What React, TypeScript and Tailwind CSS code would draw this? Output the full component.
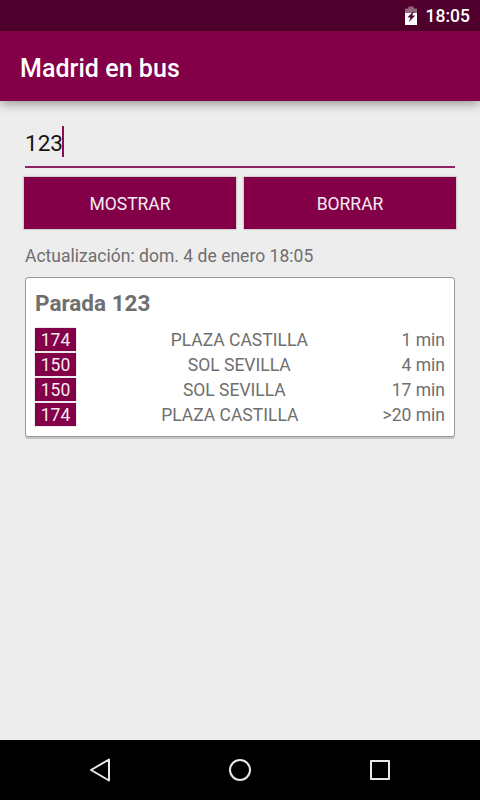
const arrivals = [
  { line: "174", destination: "PLAZA CASTILLA", time: "1 min" },
  { line: "150", destination: "SOL SEVILLA", time: "4 min" },
  { line: "150", destination: "SOL SEVILLA", time: "17 min" },
  { line: "174", destination: "PLAZA CASTILLA", time: ">20 min" },
];

function StatusBar() {
  return (
    <div className="flex h-[31px] items-start justify-end bg-[#4f002c] pr-[10px] text-white">
      <svg className="mr-[9px] mt-[6px]" width="12" height="19" viewBox="0 0 12 19">
        <path d="M3.5 0.5h5v2H12V7H0V2.5h3.5z" fill="#fff" fillOpacity="0.4" />
        <path d="M0 7h12v12H0z" fill="#fff" />
        <path d="M9 4.8 2.4 11.6h3.2L3.8 16.2l6.4-6.6H7.2z" fill="#4f002c" />
      </svg>
      <span className="mt-[6px] text-[17.5px] font-medium leading-[21px]">18:05</span>
    </div>
  );
}

function ActionButton({ label }: { label: string }) {
  return (
    <button className="h-[52px] flex-1 bg-[#830049] pt-[2px] text-[17.5px] leading-5 text-[#f3edf0] shadow-[0_0_1px_1px_rgba(110,90,80,0.2)]">
      {label}
    </button>
  );
}

function NavigationBar() {
  return (
    <div className="flex h-[60px] items-center justify-center gap-[116px] bg-black">
      <svg width="24" height="24" viewBox="0 0 24 24" fill="none" stroke="#e8e8e8" strokeWidth="2" strokeLinejoin="round">
        <path d="M21 1.5v21L3 12z" />
      </svg>
      <svg width="24" height="24" viewBox="0 0 24 24" fill="none" stroke="#e8e8e8" strokeWidth="2">
        <circle cx="12" cy="12" r="10" />
      </svg>
      <svg width="24" height="24" viewBox="0 0 24 24" fill="none" stroke="#e8e8e8" strokeWidth="2" strokeLinejoin="round">
        <path d="M3 3h18v18H3z" />
      </svg>
    </div>
  );
}

export default function App() {
  return (
    <div className="flex h-[800px] w-[480px] flex-col overflow-hidden bg-[#ededed] font-['Roboto',sans-serif] text-[#6f6f6f]">
      <StatusBar />
      <header className="flex h-[70px] items-center bg-[#830049] pl-5 pt-[5px] shadow-[0_4px_10px_-1px_rgba(0,0,0,0.36)]">
        <h1 className="text-[25px] font-medium leading-[30px] tracking-[0.04px] text-white">Madrid en bus</h1>
      </header>
      <main className="flex flex-1 flex-col px-[25px] pt-[25px]">
        <div className="flex h-[42px] items-start border-b-2 border-[#8f2362]">
          <span className="pt-[4px] text-[22.5px] leading-[27px] text-[#151515]">123</span>
          <span className="-ml-px h-[31px] w-[2px] bg-[#8f0b57]" />
        </div>
        <div className="-mx-px mt-[9px] flex gap-2">
          <ActionButton label="MOSTRAR" />
          <ActionButton label="BORRAR" />
        </div>
        <p className="mt-[17px] text-[17.5px] leading-[21px] tracking-[0.02px]">Actualización: dom. 4 de enero 18:05</p>
        <section className="mt-[10px] h-[160px] rounded-[3px] border border-[#999999] bg-white px-[9px] pt-3 shadow-[0_2px_0_#c4c4c4]">
          <h2 className="text-[22.5px] font-bold leading-[27px]">Parada 123</h2>
          <ul className="mt-[11px] flex flex-col gap-[2px] text-[17.5px] leading-[25px]">
            {arrivals.map((a, i) => (
              <li key={i} className="flex h-[23px]">
                <span className="h-[23px] w-[41px] bg-[#830049] text-center text-[#f3edf0] shadow-[0_0_1px_rgba(80,60,50,0.6)]">{a.line}</span>
                <span className="flex-1 pl-px text-center">{a.destination}</span>
                <span>{a.time}</span>
              </li>
            ))}
          </ul>
        </section>
      </main>
      <NavigationBar />
    </div>
  );
}
